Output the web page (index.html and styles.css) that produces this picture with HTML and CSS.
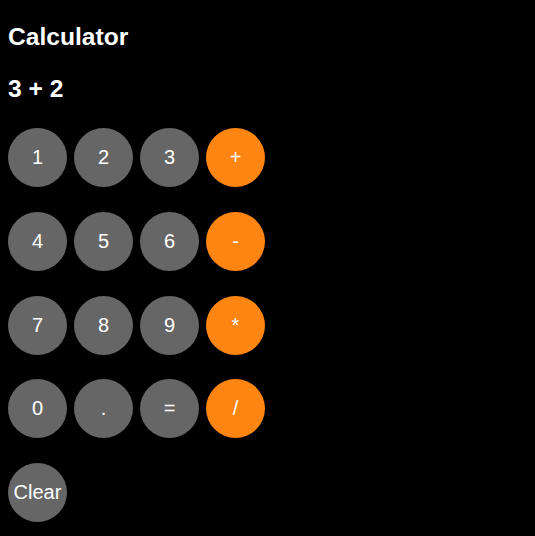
FILE: index.html
```html
<!DOCTYPE html>
<html>
<head>
<meta charset="utf-8">
<link rel="stylesheet" href="styles.css">
</head>
<body>
<h1 class="title">Calculator</h1>
<div class="display">3 + 2</div>
<div class="pad">
  <button class="key">1</button>
  <button class="key">2</button>
  <button class="key">3</button>
  <button class="key op">+</button>
  <button class="key">4</button>
  <button class="key">5</button>
  <button class="key">6</button>
  <button class="key op">-</button>
  <button class="key">7</button>
  <button class="key">8</button>
  <button class="key">9</button>
  <button class="key op">*</button>
  <button class="key">0</button>
  <button class="key">.</button>
  <button class="key">=</button>
  <button class="key op">/</button>
  <button class="key">Clear</button>
</div>
</body>
</html>
```

FILE: styles.css
```css
html, body {
  background: #000;
}
body {
  margin: 8px;
  color: #fff;
  font-family: "Liberation Sans", Arial, sans-serif;
}
.title {
  font-size: 24.6px;
  font-weight: bold;
  margin: 0;
  padding-top: 15px;
  line-height: 28px;
}
.display {
  font-size: 24.6px;
  font-weight: bold;
  line-height: 28px;
  margin-top: 24px;
}
.pad {
  margin-top: 25px;
  display: grid;
  grid-template-columns: repeat(4, 59px);
  column-gap: 7px;
  row-gap: 24.75px;
}
.key {
  width: 59px;
  height: 59px;
  border: none;
  border-radius: 50%;
  background: #666;
  color: #fff;
  font-family: "Liberation Sans", Arial, sans-serif;
  font-size: 20px;
  padding: 0;
}
.key.op {
  background: #ff8513;
}
```
